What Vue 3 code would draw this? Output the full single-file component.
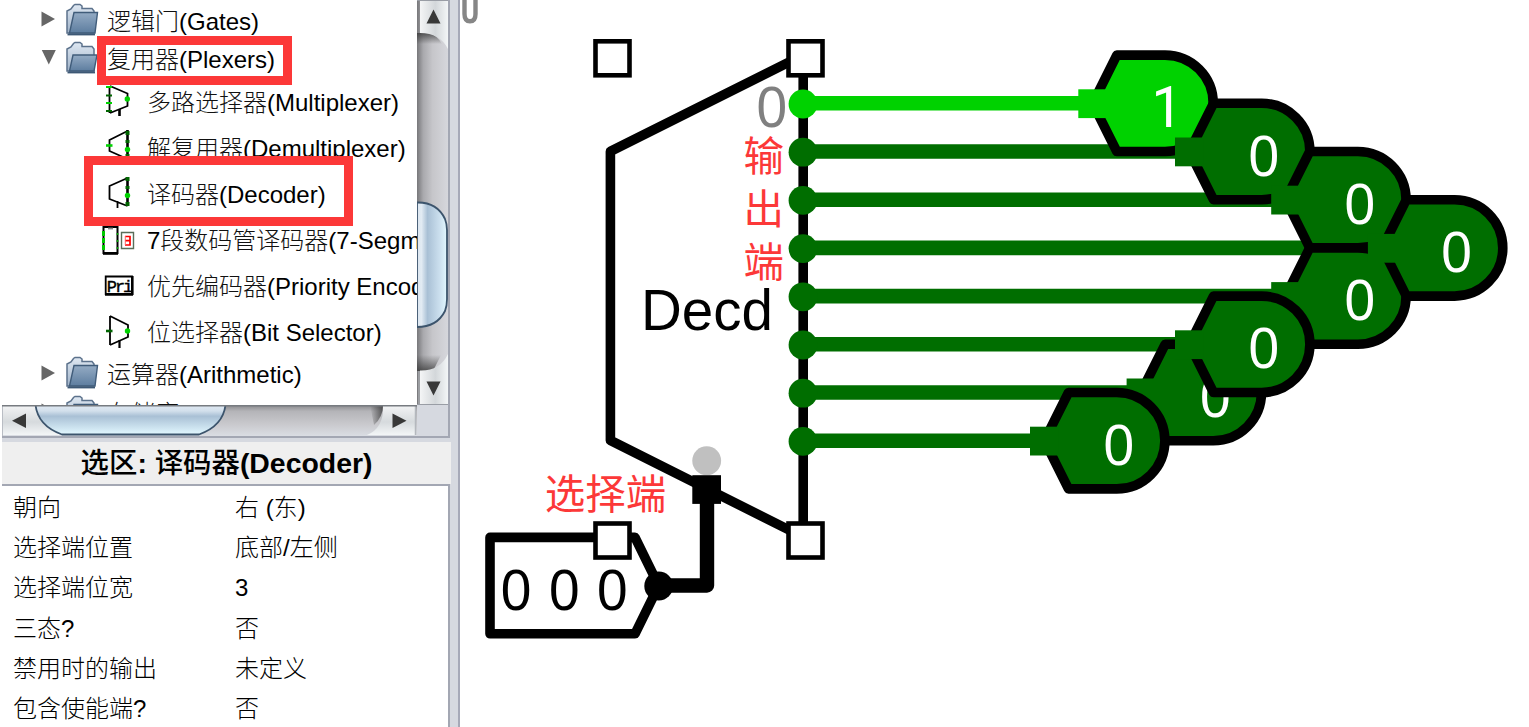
<script setup>
const treeRows = [
  { kind: 'folder', open: false, zh: '逻辑门', en: '(Gates)' },
  { kind: 'folder', open: true, zh: '复用器', en: '(Plexers)' },
  { kind: 'tool', icon: 'mux', zh: '多路选择器', en: '(Multiplexer)' },
  { kind: 'tool', icon: 'demux', zh: '解复用器', en: '(Demultiplexer)' },
  { kind: 'tool', icon: 'decoder', zh: '译码器', en: '(Decoder)' },
  { kind: 'tool', icon: 'seg', pre: '7', zh: '段数码管译码器', en: '(7-Segment Decoder)' },
  { kind: 'tool', icon: 'pri', zh: '优先编码器', en: '(Priority Encoder)' },
  { kind: 'tool', icon: 'bitsel', zh: '位选择器', en: '(Bit Selector)' },
  { kind: 'folder', open: false, zh: '运算器', en: '(Arithmetic)' },
  { kind: 'folder', open: false, zh: '存储库', en: '(Memory)' },
];

const attributes = [
  ['朝向', '右 (东)'],
  ['选择端位置', '底部/左侧'],
  ['选择端位宽', '3'],
  ['三态?', '否'],
  ['禁用时的输出', '未定义'],
  ['包含使能端?', '否'],
];

const ON = '#00d200';
const OFF = '#006e00';
const GRID = 48.2;
const rowY = (i) => 103.3 + GRID * i;

// x of each output pin's connection point, top to bottom
const pinX = [1092.7, 1189.4, 1285.6, 1382.3, 1285.6, 1189.4, 1141, 1044.4];
const outputs = pinX.map((x, i) => ({
  x,
  y: rowY(i),
  value: i === 0 ? 1 : 0,
  color: i === 0 ? ON : OFF,
}));

// later pins overlap earlier ones
const stacked = [0, 1, 2, 4, 3, 6, 5, 7].map((i) => outputs[i]);

const handles = [
  [612.5, 58.3],
  [805.5, 58.3],
  [612.5, 540.5],
  [805.5, 540.5],
];
</script>

<template>
  <div class="app">
    <aside class="sidebar">
      <div class="explorer">
        <div class="tree">
          <div v-for="(row, i) in treeRows" :key="i" class="row" :class="row.kind">
            <template v-if="row.kind === 'folder'">
              <svg class="arrow" width="16" height="16" viewBox="0 0 16 16">
                <path v-if="row.open" d="M.8 0H14.8L7.8 14.5Z" fill="#666" />
                <path v-else d="M.5 .5V15.5L14 8Z" fill="#666" />
              </svg>
              <svg class="folder-icon" width="33" height="33" viewBox="0 0 33 33">
                <defs>
                  <linearGradient id="back" x1="0" y1="0" x2="0" y2="1">
                    <stop offset="0" stop-color="#dfe8f2" />
                    <stop offset="1" stop-color="#9fb2c8" />
                  </linearGradient>
                  <linearGradient id="front" x1="0" y1="0" x2="0" y2="1">
                    <stop offset="0" stop-color="#94abc4" />
                    <stop offset="1" stop-color="#5d7d9f" />
                  </linearGradient>
                </defs>
                <path d="M1 30V8L5 6L7.500 2.500L9 1.500H14L16 3V5.500H26L28 8V30Z" fill="url(#back)" stroke="#5c728c" stroke-width="1.500" />
                <path v-if="!row.open" d="M8 9.500H31.500L29 30H3.500Z" fill="url(#front)" stroke="#405c7a" stroke-width="1.400" />
                <path v-else d="M7 14L31 14L28 30H3.500Z" fill="url(#front)" stroke="#405c7a" stroke-width="1.400" />
                <path d="M1.500 31.500H29" stroke="#3d5875" stroke-width="1.800" />
              </svg>
            </template>

            <svg v-else class="tool-icon" width="34" height="34" viewBox="0 0 34 34" fill="none" stroke="#000" stroke-width="1.800">
              <g v-if="row.icon === 'mux'">
                <path d="M8.500 1V28M9 1L26.500 8.500V21L9 28" />
                <path d="M18.500 24V31" stroke-width="2.600" />
                <path d="M5 2H11M5 18H11" stroke="#00d200" stroke-width="2.200" />
                <path d="M5 10.500H11M5 26H11" stroke="#006400" stroke-width="2.200" />
                <circle cx="26.300" cy="14" r="2.700" fill="#00d200" stroke="none" />
              </g>
              <g v-else-if="row.icon === 'demux'">
                <path d="M26.500 0L8.500 9V20L26.500 28" />
                <path d="M26.500 -1V28" stroke-width="2.600" />
                <path d="M5 14.500H11.500" stroke="#00d200" stroke-width="2.600" />
                <path d="M26.500 0V4M26.500 9V12M26.500 23V27" stroke="#006400" stroke-width="4" />
                <circle cx="26.500" cy="18.500" r="2.700" fill="#00d200" stroke="none" />
              </g>
              <g v-else-if="row.icon === 'decoder'">
                <path d="M26.500 1L8.500 9V22L26.500 29M16.500 24V31" />
                <path d="M26.500 0V29" stroke-width="2.600" />
                <path d="M26.500 0V4M26.500 9V12M26.500 25V29" stroke="#006400" stroke-width="4" />
                <circle cx="26.500" cy="18.500" r="2.700" fill="#00d200" stroke="none" />
              </g>
              <g v-else-if="row.icon === 'seg'">
                <path d="M2.500 4H16.500V30H2.500Z" stroke-width="2" />
                <path d="M2 30.500H17" stroke-width="2.600" />
                <path d="M2.500 8V28" stroke="#00c800" stroke-width="3" stroke-dasharray="5 2" />
                <path d="M16.500 10V28" stroke="#00a000" stroke-width="1.600" stroke-dasharray="2 5" />
                <path d="M7 5.500H12" stroke="#888" />
                <path d="M20.500 9.500H32.500V25.500H20.500Z" stroke="#5a6e5a" stroke-width="1.400" />
                <path d="M24 13.500H29V22H24M24 17.700H29" stroke="#f00" stroke-width="1.700" />
                <path d="M24.300 13V22" stroke="#f66" stroke-width="1" />
              </g>
              <g v-else-if="row.icon === 'pri'">
                <path d="M4.700 7.500H31V25H4.700Z" />
                <path d="M4 25.500H32M31.300 7V26" stroke-width="2.600" />
                <text x="18" y="22.500" class="pri-text" text-anchor="middle">Pri</text>
              </g>
              <g v-else>
                <path d="M9 0V29M9 0L27 9V21L9 29" />
                <path d="M18.500 24V32" stroke-width="2.200" />
                <path d="M5 15H11.500" stroke="#006400" stroke-width="2.600" />
                <circle cx="26.500" cy="15" r="2.700" fill="#00d200" stroke="none" />
              </g>
            </svg>

            <span class="label"><span v-if="row.pre">{{ row.pre }}</span><span class="zh">{{ row.zh }}</span><span class="en">{{ row.en }}</span></span>
          </div>
          <div class="mark mark-plexers"></div>
          <div class="mark mark-decoder"></div>
        </div>

        <svg class="vscroll" width="31" height="405" viewBox="0 0 31 405">
          <defs>
            <linearGradient id="vtrack">
              <stop offset="0" stop-color="#77777a" />
              <stop offset=".2" stop-color="#a9a9ad" />
              <stop offset=".5" stop-color="#c6c6ca" />
              <stop offset="1" stop-color="#d6d7dc" />
            </linearGradient>
            <linearGradient id="vbtn">
              <stop offset="0" stop-color="#f4f5f6" />
              <stop offset=".55" stop-color="#d3d7da" />
              <stop offset="1" stop-color="#f3f6f7" />
            </linearGradient>
            <linearGradient id="vthumb">
              <stop offset="0" stop-color="#dce6f0" />
              <stop offset=".15" stop-color="#e2ebf3" />
              <stop offset=".35" stop-color="#a9c0d5" />
              <stop offset=".75" stop-color="#cbdfee" />
              <stop offset="1" stop-color="#e2f8ff" />
            </linearGradient>
            <linearGradient id="vshade" x1="0" y1="0" x2="0" y2="1">
              <stop offset="0" stop-color="#333" stop-opacity=".75" />
              <stop offset="1" stop-color="#333" stop-opacity="0" />
            </linearGradient>
            <linearGradient id="vshade2" x1="0" y1="1" x2="0" y2="0">
              <stop offset="0" stop-color="#333" stop-opacity=".75" />
              <stop offset="1" stop-color="#333" stop-opacity="0" />
            </linearGradient>
          </defs>
          <rect width="31" height="405" fill="url(#vtrack)" />
          <path d="M0 33H12Q21 36 25 44H0Z" fill="url(#vshade)" />
          <path d="M3 0H31V49Q23 33 3 33Z" fill="url(#vbtn)" />
          <path d="M0 0H31" stroke="#999da5" stroke-width="2" />
          <path d="M9.500 23.500L16.500 9.500L23.500 23.500Z" fill="#383838" />
          <path d="M0 202.500Q20 202 28 219Q30 224 30 230V299Q30 306 28 311Q20 327 0 327Z" fill="url(#vthumb)" stroke="#3c546c" stroke-width="1.800" />
          <path d="M0 355H24L16 371H0Z" fill="url(#vshade2)" />
          <path d="M3 370.500Q23 371 31 354V404H3Z" fill="url(#vbtn)" />
          <path d="M2 371V405" stroke="#9c9ea2" stroke-width="2" />
          <path d="M0 404.500H31" stroke="#999da5" />
          <path d="M9.500 381.500H23.500L16.500 395.500Z" fill="#383838" />
        </svg>

        <svg class="hscroll" width="446" height="31" viewBox="0 0 446 31">
          <defs>
            <linearGradient id="htrack" x1="0" y1="0" x2="0" y2="1">
              <stop offset="0" stop-color="#88888b" />
              <stop offset=".2" stop-color="#b4b4b8" />
              <stop offset=".6" stop-color="#c8c8cc" />
              <stop offset="1" stop-color="#dadde3" />
            </linearGradient>
            <linearGradient id="hbtn" x1="0" y1="0" x2="0" y2="1">
              <stop offset="0" stop-color="#f2f3f4" />
              <stop offset=".55" stop-color="#d6dadd" />
              <stop offset="1" stop-color="#f3f6f7" />
            </linearGradient>
            <linearGradient id="hthumb" x1="0" y1="0" x2="0" y2="1">
              <stop offset="0" stop-color="#e0e9f2" />
              <stop offset=".2" stop-color="#d3e0ec" />
              <stop offset=".38" stop-color="#a9c0d5" />
              <stop offset="1" stop-color="#e2f8ff" />
            </linearGradient>
            <linearGradient id="hshade">
              <stop offset="0" stop-color="#333" stop-opacity="0" />
              <stop offset="1" stop-color="#333" stop-opacity=".75" />
            </linearGradient>
          </defs>
          <rect width="446" height="31" fill="#d6d9e0" />
          <rect width="415" height="31" fill="url(#htrack)" />
          <path d="M0 1H60V30H0Z" fill="url(#hbtn)" />
          <path d="M.5 0V31" stroke="#b9bdc4" />
          <path d="M24 8.500V23L10 15.700Z" fill="#383838" />
          <path d="M33.500 0Q36 21 60 29.500H197Q221 21 223.500 0Z" fill="url(#hthumb)" stroke="#3c546c" stroke-width="1.800" />
          <path d="M368 0H381Q381 12 372 20Z" fill="url(#hshade)" />
          <path d="M381 1H413.500V30H365Q382 23 381 1Z" fill="url(#hbtn)" />
          <path d="M413.500 1V30" stroke="#b4b8be" stroke-width="1.500" />
          <path d="M390.500 8.500V23L404.500 15.700Z" fill="#383838" />
          <path d="M0 .7H415" stroke="#777b80" stroke-width="1.500" />
        </svg>
      </div>

      <h2 class="selection"><span><span class="zh-bold">选区</span>: <span class="zh-bold">译码器</span>(Decoder)</span></h2>

      <div class="attributes">
        <div v-for="([name, value], i) in attributes" :key="i" class="attr">
          <span class="name">{{ name }}</span>
          <span class="value">{{ value }}</span>
        </div>
      </div>
    </aside>

    <main class="canvas">
      <svg width="1069" height="727" viewBox="460 0 1069 727">
        <!-- bottom of a label scrolled off the top -->
        <path d="M464.500 -6V14Q464.500 21.300 470 21.300Q475.500 21.300 475.500 14V-6" fill="none" stroke="#868686" stroke-width="4.400" />

        <!-- decoder body -->
        <path class="outline" d="M803.200 55L610.400 151.400V440.400L803.200 537Z" />
        <text class="digit" transform="translate(771.700 127) scale(.95 1)" fill="#808080">0</text>
        <text x="707" y="330" textLength="132" lengthAdjust="spacingAndGlyphs">Decd</text>

        <g v-for="(o, i) in outputs" :key="'w' + i">
          <path :d="`M803 ${o.y}H${o.x}`" :stroke="o.color" stroke-width="14.600" />
          <circle cx="803" :cy="o.y + 0.7" r="14.400" :fill="o.color" />
        </g>

        <g v-for="(o, i) in stacked" :key="'p' + i" :transform="`translate(${o.x} ${o.y})`">
          <path class="outline" :style="{ fill: o.color }" d="M0 0L24.100 -48.200H72.300A48.200 48.200 0 0 1 72.300 48.200H24.100Z" />
          <rect x="-14.400" y="-14" width="28.800" height="28.800" :fill="o.color" />
          <text class="digit" :class="{ one: o.value === 1 }" transform="translate(74.300 24) scale(.95 1)" fill="#fff">{{ o.value }}</text>
        </g>

        <!-- select input -->
        <circle cx="706.700" cy="460.700" r="14.400" fill="#c0c0c0" />
        <path d="M658.700 585.500H707V490" fill="none" stroke="#000" stroke-width="14.400" stroke-linejoin="round" />
        <rect x="692.300" y="475.200" width="28.700" height="28.700" />
        <path class="outline" d="M490 537.400H635L658.700 585.600L635 633.800H490Z" />
        <circle cx="658.700" cy="586" r="14.400" />
        <text v-for="x in [516, 564.2, 612.4]" :key="x" class="digit" :transform="`translate(${x} 609.5) scale(.95 1)`">0</text>

        <rect v-for="([x, y], i) in handles" :key="'h' + i" class="handle" :x="x - 17" :y="y - 17" width="34" height="34" />

        <g class="note">
          <text x="763.800" y="171">输</text>
          <text x="763.800" y="224">出</text>
          <text x="763.800" y="277">端</text>
          <text x="605.500" y="509">选择端</text>
        </g>
      </svg>
    </main>
  </div>
</template>

<style>
body {
  margin: 0;
  overflow: hidden;
}
</style>

<style scoped>
.app {
  display: flex;
  width: 1529px;
  height: 727px;
  overflow: hidden;
  background: #fff;
  color: #000;
  font-family: "Liberation Sans", "Noto Sans CJK SC", sans-serif;
}

.sidebar {
  box-sizing: border-box;
  flex: none;
  display: flex;
  flex-direction: column;
  width: 460px;
  height: 727px;
  padding-right: 8px;
  border-left: 2px solid #fff;
  border-right: 2px solid #a6a9b8;
  background: #d6d9e0;
}

.explorer {
  display: grid;
  grid-template-columns: 415px 31px;
  grid-template-rows: 405px 31px;
  width: 446px;
  border-right: 2px solid #a3a7b3;
  border-bottom: 2px solid #a3a7b3;
}

.vscroll,
.hscroll {
  display: block;
}
.hscroll {
  grid-column: 1 / 3;
}

.tree {
  position: relative;
  box-sizing: border-box;
  height: 405px;
  padding-top: 2px;
  overflow: hidden;
  background: #fff;
}

.row {
  display: flex;
  align-items: center;
  font-size: 24px;
  line-height: 30px;
  white-space: nowrap;
}
.row.folder {
  height: 38.5px;
  padding-left: 39px;
}
.row.tool {
  height: 46.1px;
  padding-left: 99px;
}
.label {
  padding-top: 1px;
}

.arrow {
  flex: none;
  margin: 0 9px 4px 0;
}
.folder-icon {
  flex: none;
  margin: 0 8px 4px 0;
}
.tool-icon {
  flex: none;
  margin-right: 12px;
  overflow: visible;
}
.pri-text {
  font: 17px "Liberation Mono", monospace;
  letter-spacing: -2px;
  fill: #000;
  stroke: #000;
  stroke-width: 0.4px;
}

.zh {
  font-weight: 300;
  color: #111;
}
.zh-bold {
  font-weight: 500;
}

/* red annotation boxes drawn over the tree */
.mark {
  position: absolute;
  box-sizing: border-box;
  border: 9px solid #fc3838;
}
.mark-plexers {
  left: 95px;
  top: 36px;
  width: 195px;
  height: 49px;
}
.mark-decoder {
  left: 82px;
  top: 156px;
  width: 269px;
  height: 70px;
}

.selection {
  flex: none;
  display: flex;
  align-items: center;
  justify-content: center;
  height: 42px;
  margin: 4px -1px 0 0;
  background: #efefef;
  font-size: 28.4px;
  line-height: 40px;
  font-weight: bold;
}

.attributes {
  flex: none;
  width: 446px;
  height: 241px;
  box-sizing: content-box;
  border-top: 2px solid #a3a7b3;
  border-right: 2px solid #a3a7b3;
  background: #fff;
  padding-top: 2px;
}
.attr {
  display: flex;
  align-items: center;
  height: 40.2px;
  font-size: 24px;
  line-height: 30px;
  font-weight: 300;
}
.name {
  width: 222px;
  padding-left: 11px;
}

.canvas {
  flex: 1;
}
.canvas svg {
  display: block;
}
.canvas text {
  font-size: 58px;
  text-anchor: middle;
}
.canvas text.one {
  font-family: Roboto, sans-serif;
}
.outline {
  fill: none;
  stroke: #000;
  stroke-width: 9.6px;
  stroke-linejoin: round;
}
.handle {
  fill: #fff;
  stroke: #000;
  stroke-width: 4.6px;
}
.canvas .note text {
  font-family: "Noto Sans CJK SC", sans-serif;
  font-size: 40.5px;
  fill: #fc3838;
}
</style>
